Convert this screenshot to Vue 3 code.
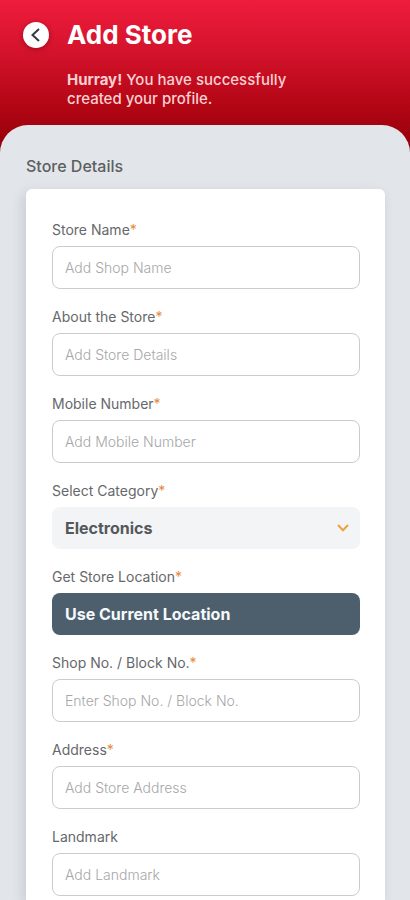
<script setup>
import { reactive, ref } from 'vue'

const form = reactive({
  name: '',
  about: '',
  mobile: '',
  category: 'Electronics',
  shopNo: '',
  address: '',
  landmark: '',
})

const categories = ['Electronics', 'Grocery', 'Fashion', 'Furniture']
const locating = ref(false)

const fields = [
  { id: 'name', kind: 'text', label: 'Store Name', placeholder: 'Add Shop Name', required: true },
  { id: 'about', kind: 'text', label: 'About the Store', placeholder: 'Add Store Details', required: true },
  { id: 'mobile', kind: 'tel', label: 'Mobile Number', placeholder: 'Add Mobile Number', required: true },
  { id: 'category', kind: 'select', label: 'Select Category', required: true },
  { id: 'location', kind: 'button', label: 'Get Store Location', required: true },
  { id: 'shopNo', kind: 'text', label: 'Shop No. / Block No.', placeholder: 'Enter Shop No. / Block No.', required: true },
  { id: 'address', kind: 'text', label: 'Address', placeholder: 'Add Store Address', required: true },
  { id: 'landmark', kind: 'text', label: 'Landmark', placeholder: 'Add Landmark', required: false },
]
</script>

<template>
  <div class="page">
    <header class="header">
      <button class="back" type="button" aria-label="Back">
        <svg viewBox="0 0 26 26" width="26" height="26" aria-hidden="true">
          <path d="M16 7 L9.5 13 L16 19" />
        </svg>
      </button>
      <div class="intro">
        <h1>Add Store</h1>
        <p><strong>Hurray!</strong> You have successfully<br />created your profile.</p>
      </div>
    </header>

    <main class="sheet">
      <h2>Store Details</h2>
      <form class="card" @submit.prevent>
        <div v-for="field in fields" :key="field.id" class="field">
          <label :for="field.id">{{ field.label }}<span v-if="field.required" class="star">*</span></label>

          <div v-if="field.kind === 'select'" class="select-wrap">
            <select :id="field.id" v-model="form.category" class="select">
              <option v-for="c in categories" :key="c">{{ c }}</option>
            </select>
            <svg class="chevron" viewBox="0 0 12 8" width="12" height="8" aria-hidden="true">
              <path d="M1 1 L6 6.2 L11 1" />
            </svg>
          </div>

          <button
            v-else-if="field.kind === 'button'"
            :id="field.id"
            class="locate"
            type="button"
            @click="locating = true"
          >
            Use Current Location
          </button>

          <input
            v-else
            :id="field.id"
            v-model="form[field.id]"
            class="input"
            :type="field.kind"
            :placeholder="field.placeholder"
          />
        </div>
      </form>
    </main>
  </div>
</template>

<style>
body {
  margin: 0;
  background: #e2e6ea;
}
</style>

<style scoped>
.page {
  box-sizing: border-box;
  min-height: 100vh;
  display: flex;
  flex-direction: column;
  font-family: Inter, "Liberation Sans", sans-serif;
  background: linear-gradient(#ef1c3d 0, #d5132c 50px, #b00513 110px, #90000a 152px, #e2e6ea 152px);
}

.header {
  display: flex;
  gap: 18px;
  padding: 20px 23px 17px;
}

.back {
  flex: none;
  width: 26px;
  height: 26px;
  margin-top: 2px;
  padding: 0;
  border: 0;
  border-radius: 50%;
  background: #fff;
  box-shadow: 0 1px 5px rgba(80, 0, 10, 0.45);
}

.back svg {
  display: block;
  fill: none;
  stroke: #36393f;
  stroke-width: 2;
}

h1 {
  margin: 0 0 20px;
  font-size: 26px;
  line-height: 30px;
  font-weight: 700;
  color: #fff;
}

.intro p {
  margin: 0;
  font-size: 15px;
  line-height: 19px;
  font-weight: 500;
  color: #fbd0d2;
}

.intro strong {
  font-weight: 700;
}

.sheet {
  flex: 1;
  display: flex;
  flex-direction: column;
  padding: 30px 25px 0 26px;
  border-radius: 28px 28px 0 0;
  background: #e2e6ea;
}

h2 {
  margin: 0 0 12px;
  font-size: 16px;
  line-height: 22px;
  font-weight: 500;
  color: #5c5f62;
}

.card {
  flex: 1;
  display: flex;
  flex-direction: column;
  gap: 20px;
  padding: 33px 25px 0 26px;
  border-radius: 6px 6px 0 0;
  background: #fff;
  box-shadow: -3px 4px 12px rgba(90, 90, 120, 0.2);
}

.field {
  display: flex;
  flex-direction: column;
  gap: 8px;
}

label {
  font-size: 14px;
  line-height: 16px;
  color: #66686b;
}

.star {
  color: #e8883a;
}

.input,
.select,
.locate {
  box-sizing: border-box;
  width: 100%;
  margin: 0;
  padding: 0 13px;
  border-radius: 8px;
  font-family: inherit;
}

.input {
  height: 43px;
  padding: 0 12px;
  border: 1px solid #cbcccd;
  background: #fff;
  font-size: 14px;
  color: #55585b;
}

.input::placeholder {
  font-weight: 300;
  color: #a6a7a8;
  opacity: 1;
}

.select-wrap {
  display: grid;
  align-items: center;
}

.select {
  grid-area: 1 / 1;
  height: 42px;
  border: 0;
  appearance: none;
  background: #f2f4f5;
  font-size: 16px;
  font-weight: 700;
  color: #55585b;
}

.chevron {
  grid-area: 1 / 1;
  justify-self: end;
  margin-right: 11px;
  pointer-events: none;
  fill: none;
  stroke: #eda23f;
  stroke-width: 2;
}

.locate {
  height: 42px;
  border: 0;
  background: #4d5e6c;
  text-align: left;
  font-size: 16px;
  font-weight: 700;
  color: #f4f9fc;
}
</style>
